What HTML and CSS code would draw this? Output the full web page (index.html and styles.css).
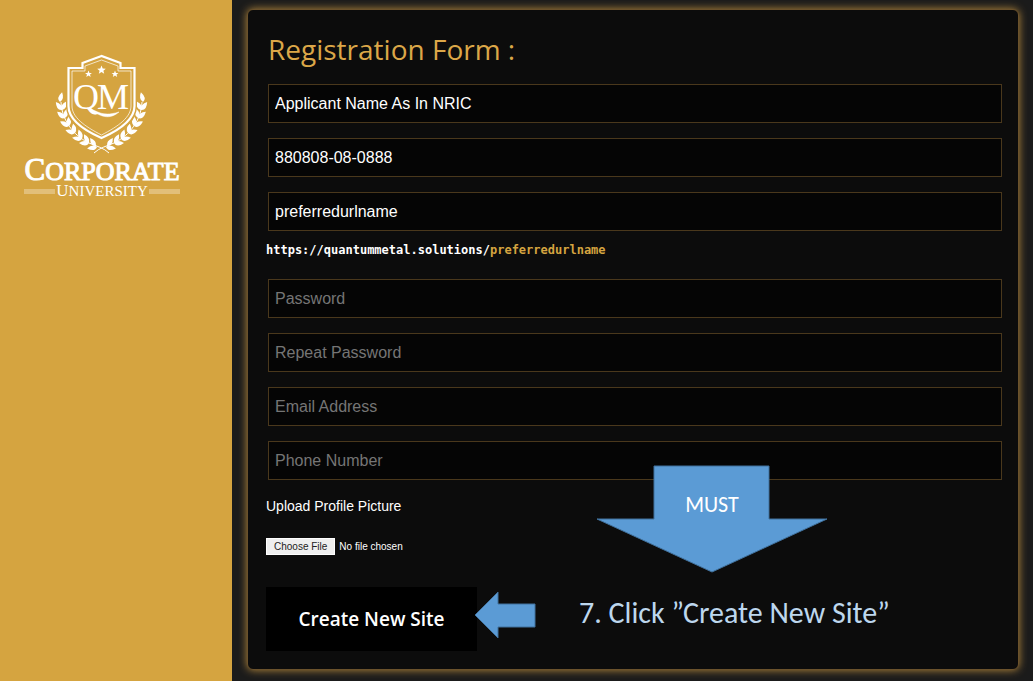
FILE: index.html
```html
<!DOCTYPE html>
<html lang="en">

<head>
    <meta charset="utf-8">
    <title>Registration Form</title>

    <link rel="stylesheet" href="styles.css">
</head>

<body>

    <aside class="sidebar">
        <div class="logo">
            <svg class="crest" viewBox="0 0 104 105" width="104" height="105" fill="none" stroke="#fff">
                <defs>
                    <path id="leaf" d="M0 0 Q3 -5 10 0 Q4 4 0 0 Z" fill="#fff" stroke="none" />
                    <path id="star" d="M0 -4.4 L1.2 -1.4 L4.3 -1.3 L1.9 .7 L2.7 3.7 L0 2 L-2.7 3.7 L-1.9 .7 L-4.3 -1.3 L-1.2 -1.4 Z" fill="#fff" stroke="none" />
                    <g id="branch">
                        <path d="M59 103 C54 98 46 96 39 93 C28 88 12 74 11 52" />
                        <use href="#leaf" transform="translate(47 97) rotate(172)" />
                        <use href="#leaf" transform="translate(46 96) rotate(234)" />
                        <use href="#leaf" transform="translate(39 93) rotate(180)" />
                        <use href="#leaf" transform="translate(39 93) rotate(240)" />
                        <use href="#leaf" transform="translate(32 89) rotate(187)" />
                        <use href="#leaf" transform="translate(32 89) rotate(250)" />
                        <use href="#leaf" transform="translate(25 83) rotate(197)" />
                        <use href="#leaf" transform="translate(25 83) rotate(260)" />
                        <use href="#leaf" transform="translate(19 76) rotate(207)" />
                        <use href="#leaf" transform="translate(19 76) rotate(270)" />
                        <use href="#leaf" transform="translate(15 68) rotate(218)" />
                        <use href="#leaf" transform="translate(15 68) rotate(284)" />
                        <use href="#leaf" transform="translate(12 60) rotate(232)" />
                        <use href="#leaf" transform="translate(12 60) rotate(298)" />
                        <use href="#leaf" transform="translate(10 52) rotate(282)" />
                    </g>
                </defs>
                <use href="#branch" />
                <use href="#branch" transform="translate(103 0) scale(-1 1)" />
                <path d="M51.5 6 L32.5 13 V18 H18.5 V56 C18.5 70 31 80 51.5 90 C72 80 84.5 70 84.5 56 V18 H70.5 V13 Z" fill="#d5a440" stroke="#d5a440" stroke-width="5" />
                <path d="M51.5 6 L32.5 13 V18 H18.5 V56 C18.5 69 31 79 51.5 88 C72 79 84.5 69 84.5 56 V18 H70.5 V13 Z" stroke-width="2.2" />
                <path d="M51.5 10 L35 16 V21 H22 V56 C22 67 34 76 51.5 85 C69 76 81 67 81 56 V21 H68 V16 Z" stroke-width=".7" />
                <use href="#star" transform="translate(51.5 20)" />
                <use href="#star" transform="translate(38.5 24) scale(.8)" />
                <use href="#star" transform="translate(65 24) scale(.8)" />
                <text class="monogram" x="23" y="59">Q</text>
                <text class="monogram" x="47" y="59">M</text>
                <path d="M37 58 C46 59 50 68 69 62 C57 72 48 64 37 58 Z" fill="#fff" stroke-width=".5" />
            </svg>
            <div class="logo-name">Corporate</div>
            <div class="logo-sub"><span>University</span></div>
        </div>
    </aside>

    <main class="content">
        <form class="card" action="">
            <h1>Registration Form :</h1>

            <div class="fields">
                <input type="text" aria-label="Applicant Name" value="Applicant Name As In NRIC">
                <input type="text" aria-label="NRIC" value="880808-08-0888">
                <input type="text" aria-label="Preferred URL name" value="preferredurlname">
            </div>

            <p class="url">https://quantummetal.solutions/<span>preferredurlname</span></p>

            <div class="fields">
                <input type="password" aria-label="Password" placeholder="Password">
                <input type="password" aria-label="Repeat Password" placeholder="Repeat Password">
                <input type="email" aria-label="Email Address" placeholder="Email Address">
                <input type="tel" aria-label="Phone Number" placeholder="Phone Number">
            </div>

            <div class="upload">
                <label for="picture">Upload Profile Picture</label>
                <input type="file" id="picture">
            </div>

            <div class="actions">
                <button type="submit">Create New Site</button>
                <svg class="arrow-left" viewBox="0 0 62 48" width="62" height="48">
                    <path d="M1 24 L24 1 V13 H61 V36 H24 V47 Z" />
                </svg>
                <p class="step">7. Click ”Create New Site”</p>
            </div>

            <div class="must">
                <svg viewBox="0 0 232 108" width="232" height="108">
                    <path d="M58 1 H173 V54 H231 L116 107 L1 54 H58 Z" />
                </svg>
                <span>MUST</span>
            </div>
        </form>
    </main>

</body>

</html>
```

FILE: styles.css
```css
* {
    box-sizing: border-box;
}

body {
    display: flex;
    min-height: 100vh;
    margin: 0;
    background: #1b1b1b;
    color: #fff;
    font-family: "Liberation Sans", Arial, sans-serif;
}

h1,
p {
    margin: 0;
}

/* sidebar */

.sidebar {
    flex: none;
    width: 232px;
    padding: 50px 0 0 24px;
    background: #d5a440;
}

.logo {
    display: flex;
    flex-direction: column;
    align-items: center;
    width: 156px;
    font-family: "Liberation Serif", "Times New Roman", serif;
    text-transform: uppercase;
}

.crest {
    display: block;
}

.monogram {
    fill: #fff;
    stroke: none;
    font-size: 36px;
}

.logo-name {
    padding-top: 2px;
    font-size: 26px;
    line-height: 26px;
    -webkit-text-stroke: 1px #fff;
}

.logo-name::first-letter {
    font-size: 31px;
}

.logo-sub {
    display: flex;
    align-items: center;
    gap: 1px;
    width: 100%;
    font-size: 15px;
    line-height: 12px;
}

.logo-sub span::first-letter {
    font-size: 17px;
}

.logo-sub::before,
.logo-sub::after {
    content: "";
    flex: 1;
    height: 5px;
    background: #e2bf79;
}

/* form */

.content {
    flex: 1;
    padding: 9px 14px 11px 15px;
}

.card {
    position: relative;
    height: 100%;
    padding: 19px 16px 17px 18px;
    background: #0c0c0c;
    border: 1px solid #6b522c;
    border-radius: 6px;
    box-shadow: 0 0 8px #b98b3d;
}

h1 {
    padding-left: 2px;
    color: #dba748;
    font-family: "Segoe UI", "Open Sans", sans-serif;
    font-size: 28px;
    font-weight: 400;
    line-height: 40px;
}

.fields {
    display: grid;
    gap: 15px;
    padding: 15px 0 0 2px;
}

.fields input {
    width: 100%;
    height: 39px;
    padding: 0 6px;
    background: #050505;
    border: 1px solid #4a381c;
    border-radius: 0;
    color: #fff;
    font-family: inherit;
    font-size: 16px;
}

.fields input::placeholder {
    color: #757575;
}

.url {
    padding: 11px 0 6px;
    font-family: Consolas, "DejaVu Sans Mono", monospace;
    font-size: 12px;
    font-weight: bold;
    line-height: 16px;
}

.url span {
    color: #d5a440;
}

.upload {
    display: flex;
    flex-direction: column;
    align-items: flex-start;
    gap: 22px;
    padding-top: 16px;
    font-size: 14px;
    line-height: 20px;
}

.upload input {
    font-family: inherit;
    font-size: 10px;
    line-height: 14px;
}

.upload input::file-selector-button {
    height: 17px;
    padding: 0 7px;
    margin-right: 4px;
    background: #efefef;
    border: 1px solid #fff;
    color: #222;
    font-family: inherit;
    font-size: 10px;
}

.actions {
    display: flex;
    align-items: center;
    padding-top: 32px;
}

.actions button {
    width: 211px;
    height: 64px;
    background: #000;
    border: 0;
    color: #fff;
    font-family: "Segoe UI", "Open Sans", sans-serif;
    font-size: 19px;
    font-weight: 600;
}

.actions svg,
.must svg {
    display: block;
    fill: #5b9bd5;
    stroke: #41719c;
}

.arrow-left {
    margin: 0 43px 8px -3px;
}

.step {
    padding-bottom: 12px;
    color: #bdd7ee;
    font-family: Calibri, Lato, sans-serif;
    font-size: 30px;
    line-height: 34px;
}

/* callout arrow over the form */

.must {
    position: absolute;
    top: 455px;
    left: 348px;
}

.must span {
    position: absolute;
    top: 28px;
    left: 0;
    width: 100%;
    font-family: Calibri, Lato, sans-serif;
    font-size: 22px;
    line-height: 24px;
    text-align: center;
}
```
